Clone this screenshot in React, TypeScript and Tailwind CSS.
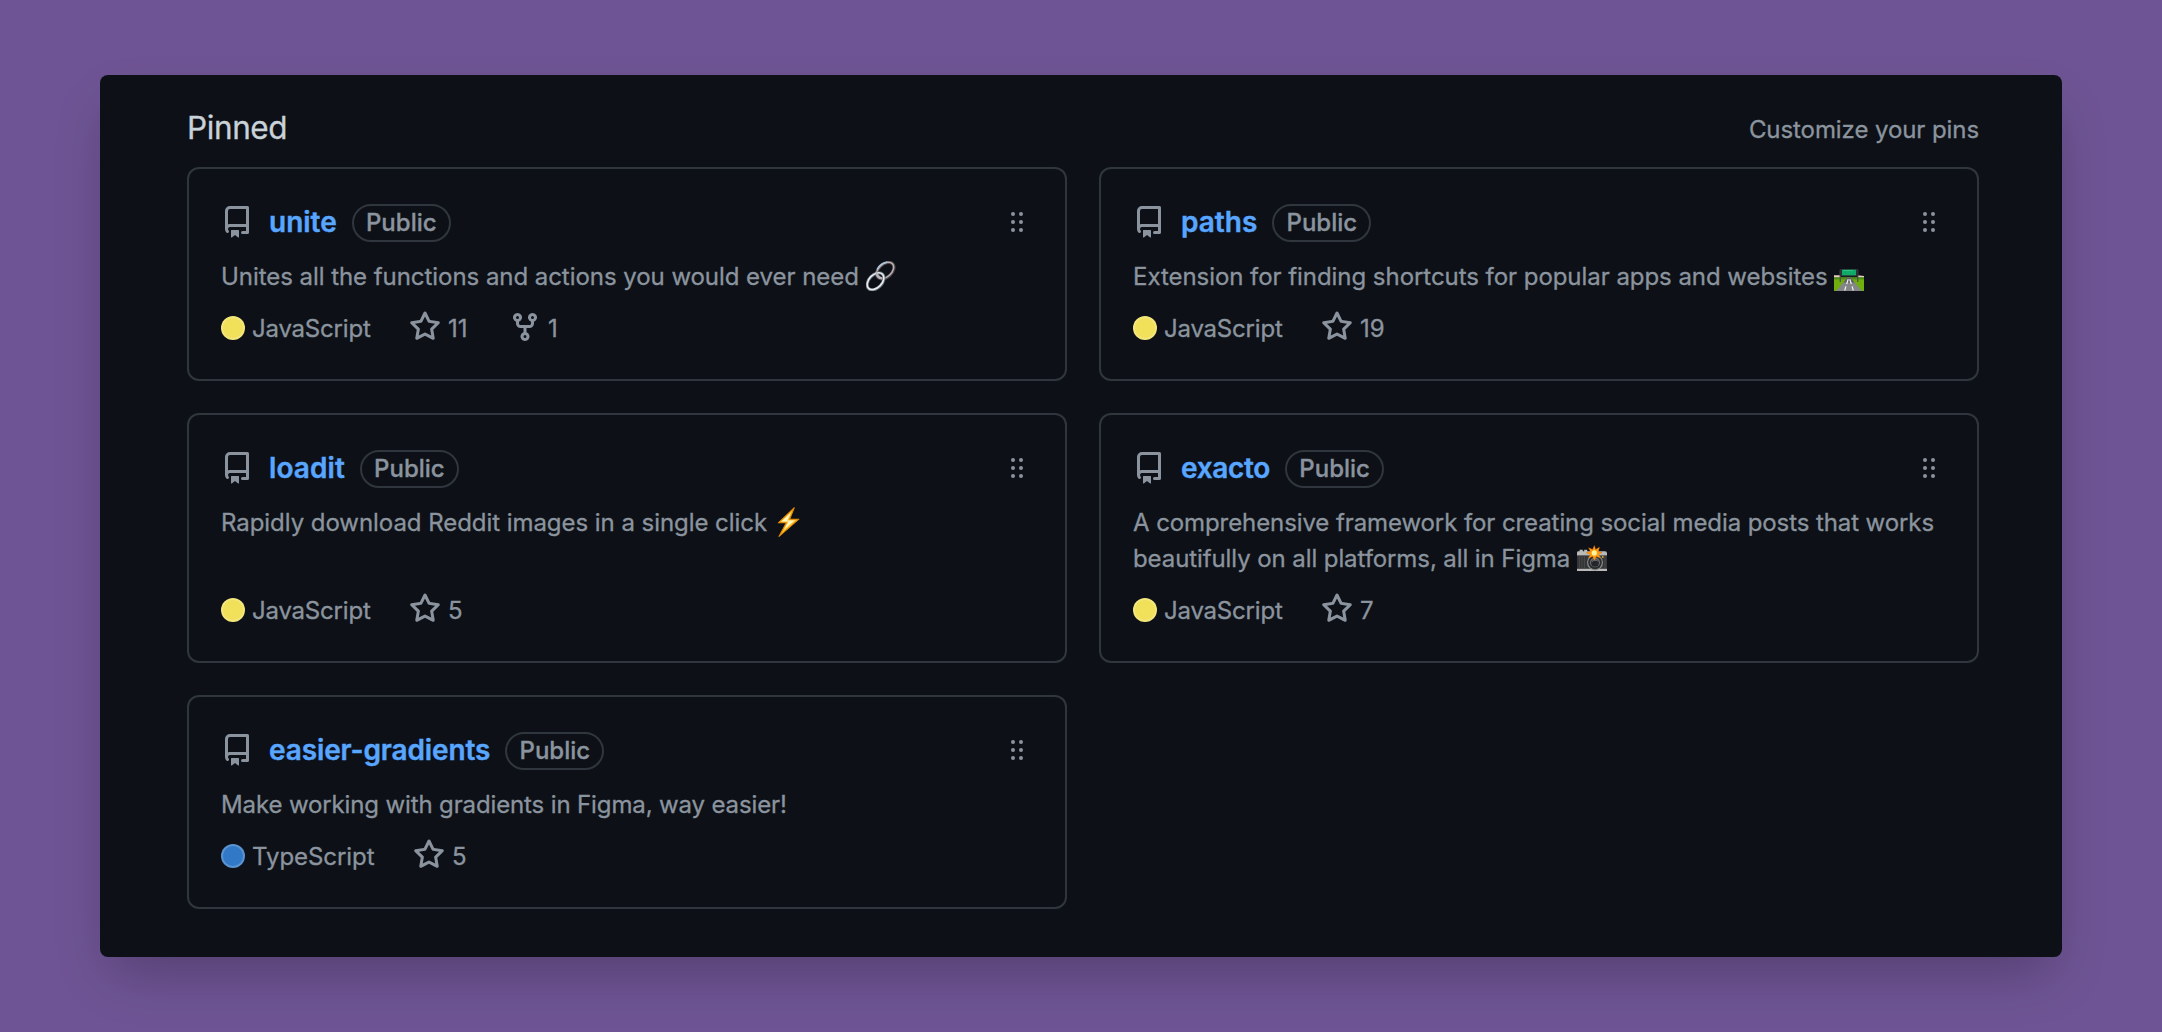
import React from 'react';

type Emoji = 'link' | 'motorway' | 'zap' | 'camera';

type Repo = {
  name: string;
  nameClass?: string;
  description: string;
  descriptionClass: string;
  emoji?: Emoji;
  language: 'JavaScript' | 'TypeScript';
  stars: number;
  forks?: number;
};

const repos: Repo[] = [
  {
    name: 'unite',
    description: 'Unites all the functions and actions you would ever need',
    descriptionClass: 'tracking-[-0.05px]',
    emoji: 'link',
    language: 'JavaScript',
    stars: 11,
    forks: 1,
  },
  {
    name: 'paths',
    description: 'Extension for finding shortcuts for popular apps and websites',
    descriptionClass: 'tracking-[-0.05px]',
    emoji: 'motorway',
    language: 'JavaScript',
    stars: 19,
  },
  {
    name: 'loadit',
    nameClass: 'tracking-[0.08px]',
    description: 'Rapidly download Reddit images in a single click',
    descriptionClass: 'tracking-[-0.05px]',
    emoji: 'zap',
    language: 'JavaScript',
    stars: 5,
  },
  {
    name: 'exacto',
    nameClass: 'tracking-[-0.3px]',
    description:
      'A comprehensive framework for creating social media posts that works beautifully on all platforms, all in Figma',
    descriptionClass: 'tracking-[-0.09px]',
    emoji: 'camera',
    language: 'JavaScript',
    stars: 7,
  },
  {
    name: 'easier-gradients',
    nameClass: 'tracking-[-0.12px]',
    description: 'Make working with gradients in Figma, way easier!',
    descriptionClass: 'tracking-[-0.13px]',
    language: 'TypeScript',
    stars: 5,
  },
];

const paths = {
  repo: 'M2 2.5A2.5 2.5 0 014.5 0h8.75a.75.75 0 01.75.75v12.5a.75.75 0 01-.75.75h-2.5a.75.75 0 110-1.5h1.75v-2h-8a1 1 0 00-.714 1.7.75.75 0 01-1.072 1.05A2.495 2.495 0 012 11.5v-9zm10.5-1V9h-8c-.356 0-.694.074-1 .208V2.5a1 1 0 011-1h8zM5 12.25v3.25a.25.25 0 00.4.2l1.45-1.087a.25.25 0 01.3 0L8.6 15.7a.25.25 0 00.4-.2v-3.25a.25.25 0 00-.25-.25h-3.5a.25.25 0 00-.25.25z',
  star: 'M8 .25a.75.75 0 01.673.418l1.882 3.815 4.21.612a.75.75 0 01.416 1.279l-3.046 2.97.719 4.192a.75.75 0 01-1.088.791L8 12.347l-3.766 1.98a.75.75 0 01-1.088-.79l.72-4.194L.818 6.374a.75.75 0 01.416-1.28l4.21-.611L7.327.668A.75.75 0 018 .25zm0 2.445L6.615 5.5a.75.75 0 01-.564.41l-3.097.45 2.24 2.184a.75.75 0 01.216.664l-.528 3.084 2.769-1.456a.75.75 0 01.698 0l2.77 1.456-.53-3.084a.75.75 0 01.216-.664l2.24-2.183-3.096-.45a.75.75 0 01-.564-.41L8 2.694v.001z',
  fork: 'M5 3.25a.75.75 0 11-1.5 0 .75.75 0 011.5 0zm0 2.122a2.25 2.25 0 10-1.5 0v.878A2.25 2.25 0 005.75 8.5h1.5v2.128a2.251 2.251 0 101.5 0V8.5h1.5a2.25 2.25 0 002.25-2.25v-.878a2.25 2.25 0 10-1.5 0v.878a.75.75 0 01-.75.75h-4.5A.75.75 0 015 6.25v-.878zm3.75 7.378a.75.75 0 11-1.5 0 .75.75 0 011.5 0zm3-8.75a.75.75 0 100-1.5.75.75 0 000 1.5z',
  grabber:
    'M10 13a1 1 0 100-2 1 1 0 000 2zm-4 0a1 1 0 100-2 1 1 0 000 2zm1-5a1 1 0 11-2 0 1 1 0 012 0zm3 1a1 1 0 100-2 1 1 0 000 2zm1-5a1 1 0 11-2 0 1 1 0 012 0zM6 5a1 1 0 100-2 1 1 0 000 2z',
};

function Icon({ name, className = '' }: { name: keyof typeof paths; className?: string }) {
  return (
    <svg viewBox="0 0 16 16" fill="currentColor" aria-hidden="true" className={`size-8 shrink-0 ${className}`}>
      <path fillRule="evenodd" d={paths[name]} />
    </svg>
  );
}

function EmojiArt({ kind }: { kind: Emoji }) {
  return (
    <svg viewBox="0 0 30 30" role="img" aria-label={kind} className="inline-block size-[30px] align-[-6px]">
      {kind === 'link' && (
        <g fill="none">
          <ellipse cx="19.3" cy="9.6" rx="10" ry="6.6" transform="rotate(-42 19.3 9.6)" stroke="#4f4648" strokeWidth="3.2" />
          <ellipse cx="19.1" cy="9.4" rx="9.9" ry="6.5" transform="rotate(-42 19.1 9.4)" stroke="#b9b3b8" strokeWidth="1.5" />
          <path d="M11 8.5C13 4.8 17 1.7 21 1.3" stroke="#a9c4dc" strokeWidth="1.4" />
          <ellipse cx="9.6" cy="20.4" rx="10" ry="6.6" transform="rotate(-46 9.6 20.4)" stroke="#60656b" strokeWidth="3.2" />
          <ellipse cx="9.5" cy="20.2" rx="9.9" ry="6.5" transform="rotate(-46 9.5 20.2)" stroke="#e6edf2" strokeWidth="1.7" />
          <path d="M10.2 10.8c.6 3.2 2.6 5.6 6 6.7" stroke="#b9b3b8" strokeWidth="2" />
        </g>
      )}
      {kind === 'motorway' && (
        <g>
          <path d="M0 14.2h7v2.6H0zM23 14.2l7 .8v1.8h-7z" fill="#e8cfc8" />
          <path d="M0 16.4h30V30H0z" fill="#6fae0c" />
          <path d="M0 16.4h30v2H0z" fill="#4d8a1c" />
          <path d="M13.6 16.4h2.8L28 30H2z" fill="#858688" />
          <path d="M13.6 16.4h2.8l4.2 5H9.4z" fill="#5d5f60" />
          <path d="M14.2 18.2 12.7 23M11.9 25.3 10.7 29.5M15.8 18.2l1.5 4.8M18.1 25.3l1.2 4.2" stroke="#f2f2f2" strokeWidth="1.2" />
          <path d="M6.3 9.2V21M23.7 9.2V21" stroke="#4c5254" strokeWidth="1.3" />
          <path d="M5.8 8h18.4v7.4H5.8z" fill="#2a3233" />
          <path d="M8 8.7h14v5.6H8z" fill="#0fa968" />
          <path d="M9 9.6h10" stroke="#3cc98c" strokeWidth=".8" />
        </g>
      )}
      {kind === 'zap' && (
        <g strokeLinejoin="round">
          <path d="M20.2.8 4.4 15.8h8L5 29.4 24.8 12.2h-9.2z" fill="#ffc52e" stroke="#e58a00" strokeWidth="1.1" />
          <path d="M17 5.4 7.4 14.4h7.2L10 22.8l10.6-9.2h-7.4z" fill="#fff6c4" />
        </g>
      )}
      {kind === 'camera' && (
        <g>
          <path d="M1 8.2h1.6V6.8h3.2v1.4h1.4V6.8h3v1.4H28q2 0 2 2V28H0V10q0-1.8 1-1.8z" fill="#b9bab8" />
          <path d="M0 12.4h30v13.4H0z" fill="#343536" />
          <path d="M2.5 12.4v13.4M5 12.4v13.4M7.5 12.4v13.4M28 12.4v13.4" stroke="#4b4c4d" strokeWidth=".8" />
          <circle cx="18" cy="19.4" r="8" fill="#8b8c8d" />
          <circle cx="18" cy="19.4" r="6.8" fill="#2c2d2f" />
          <circle cx="18" cy="19.4" r="4.9" fill="#737679" />
          <circle cx="18" cy="19.8" r="3.9" fill="#24262b" />
          <path d="M15.2 18.4a3.4 3.4 0 015.4-.4" fill="none" stroke="#9a9da1" strokeWidth="1" />
          <path d="M25 13.2h1.6v1.6H25z" fill="#f4c430" />
          <path
            d="m17.4 2.6 1.2 4 3.8-2.4-1 4.2 3.6 1-3.4 1.8 1.8 4-4-1.8-2.2 4-1.4-4-4.4 1.6 2-3.6-4.2-1.6 4.2-1.4-1.8-3.6 4 1.6z"
            fill="#ff9d0a"
            stroke="#d9660a"
            strokeWidth=".4"
          />
          <circle cx="17.3" cy="9.9" r="2.6" fill="#fff3a0" />
        </g>
      )}
    </svg>
  );
}

function RepoCard({ repo }: { repo: Repo }) {
  return (
    <article className="flex flex-col rounded-xl border-2 border-[#30363d] p-8">
      <div className="flex h-11 items-center">
        <Icon name="repo" className="mb-0.5" />
        <a
          className={`mb-0.5 ml-4 text-[28px] leading-10 font-semibold text-[#58a6ff] [-webkit-text-stroke:0.4px] ${repo.nameClass ?? ''}`}
        >
          {repo.name}
        </a>
        <span className="ml-[15px] flex h-[38px] w-[99px] items-center justify-center rounded-full border-2 border-[#30363d] font-medium">
          Public
        </span>
        <Icon name="grabber" className="mb-0.5 ml-auto" />
      </div>
      <p className={`mt-3.5 mb-4 leading-9 ${repo.descriptionClass}`}>
        {repo.description} {repo.emoji && <EmojiArt kind={repo.emoji} />}
      </p>
      <div className="mt-auto flex h-9 items-start leading-9">
        <span
          className={`mt-[5px] size-6 rounded-full border-2 border-white/20 ${
            repo.language === 'JavaScript' ? 'bg-[#f1e05a]' : 'bg-[#3178c6]'
          }`}
        />
        <span
          className={`ml-[7px] ${repo.language === 'JavaScript' ? 'tracking-[-0.2px]' : 'tracking-[-0.05px]'}`}
        >
          {repo.language}
        </span>
        <Icon name="star" className="ml-[38.5px]" />
        <span className="ml-[7px] min-w-[23px]">{repo.stars}</span>
        {repo.forks !== undefined && (
          <>
            <Icon name="fork" className="ml-[38px]" />
            <span className="ml-[7px]">{repo.forks}</span>
          </>
        )}
      </div>
    </article>
  );
}

export default function App() {
  return (
    <main className="flex h-[1032px] w-[2162px] items-center justify-center bg-[#6e5494] font-['Inter',sans-serif] text-2xl text-[#8b949e] [-webkit-text-stroke:0.3px]">
      <section className="h-[882px] w-[1962px] rounded-lg bg-[#0d1117] pr-[83px] pl-[87px] shadow-2xl">
        <header className="flex h-[92px] items-start justify-between">
          <h2 className="pt-[29px] text-[31.5px] leading-[48px] tracking-[-0.4px] text-[#c9d1d9]">Pinned</h2>
          <a className="pt-[37px] leading-9 tracking-[-0.08px]">Customize your pins</a>
        </header>
        <div className="grid grid-cols-2 gap-8">
          {repos.map((repo) => (
            <RepoCard key={repo.name} repo={repo} />
          ))}
        </div>
      </section>
    </main>
  );
}
